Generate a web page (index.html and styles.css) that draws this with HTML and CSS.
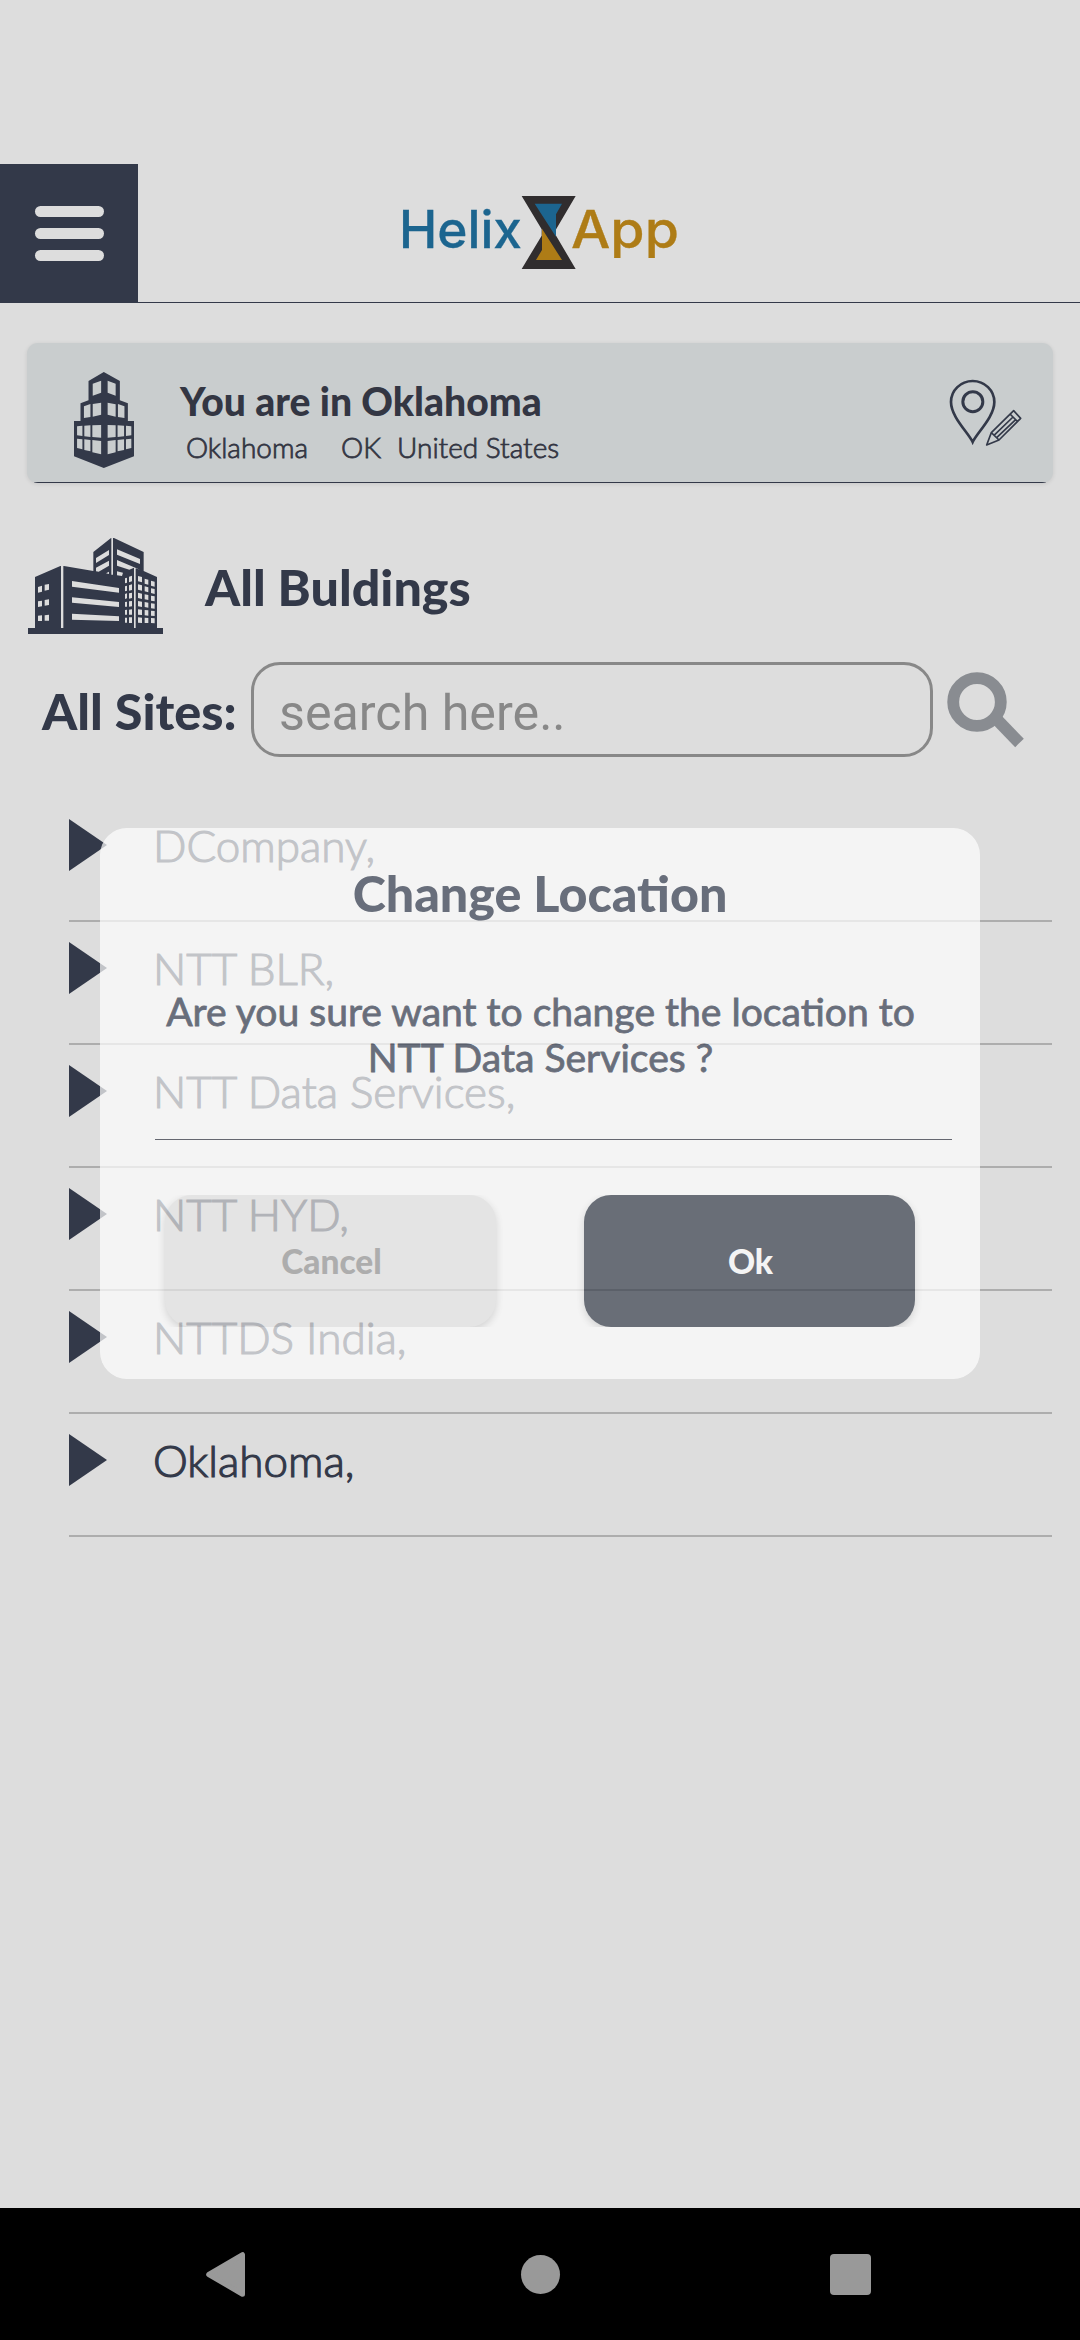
FILE: index.html
```html
<!DOCTYPE html>
<html lang="en">
<head>
<meta charset="utf-8">
<title>Helix App</title>
<link rel="stylesheet" href="styles.css">
</head>
<body>
<div class="screen">
  <header class="header">
    <button class="menu" aria-label="Menu"><span class="bar"></span><span class="bar"></span><span class="bar"></span></button>
    <svg class="logo" viewBox="0 0 300 100">
      <text class="logo-text helix" x="15" y="68.300" textLength="123" lengthAdjust="spacingAndGlyphs">Helix</text>
      <g transform="translate(-4 -10) scale(.33333)">
        <path fill="#302d2e" d="M425 78H587L527 180V195L587 297H425L485 197V178Z"/>
        <path fill="#1c658f" d="M464 101H546L528 133V200Z"/>
        <path fill="#ae7c16" d="M486 176L546 270H468L486 240Z"/>
      </g>
      <text class="logo-text app" x="187" y="68.300" textLength="108" lengthAdjust="spacingAndGlyphs">App</text>
    </svg>
  </header>

  <section class="place">
    <svg class="tower" viewBox="193 126 157 288" preserveAspectRatio="none">
      <path fill="#333949" d="M271 126L313 153V211L334 220V273H350V379L271 414L193 379V273H210V220L231 211V153Z"/>
      <path fill="#c9cdce" d="M242 161L264 152V188L242 197ZM281 152L302 161V197L281 188ZM219 229L236 222V261L219 264ZM242 222L264 218V254L242 260ZM281 218L302 223V260L281 254ZM308 222L325 229V264L308 261ZM201 289L215 287V318L201 316ZM220 287L236 286V321L220 319ZM241 286L264 285V323L241 321ZM281 285L302 286V321L281 323ZM307 286L324 287V319L307 321ZM329 287L343 289V316L329 318ZM201 326L215 328V358L201 354ZM220 328L236 330V364L220 360ZM241 330L264 333V373L241 367ZM281 333L302 330V367L281 373ZM307 330L324 328V360L307 364ZM329 328L343 326V354L329 358Z"/>
    </svg>
    <div class="place-text">
      <h2 class="place-title">You are in Oklahoma</h2>
      <p class="place-sub"><span class="city">Oklahoma</span><span class="state">OK</span><span class="country">United States</span></p>
    </div>
    <svg class="pin" viewBox="148 148 222 204" fill="none" stroke="#333949">
      <path stroke-width="8" d="M219 337C206 309 154 262 154 217A65 63 0 0 1 284 217C284 262 232 309 219 337Z"/>
      <circle stroke-width="9" cx="219.500" cy="216" r="30"/>
      <path stroke-width="5" stroke-linejoin="round" d="M342 243L363 266L298 331L261 346L275 309ZM275 309L298 331M331 253L353 275M283 317L340 262M291 324L348 270"/>
    </svg>
  </section>

  <div class="heading">
    <svg class="city-icon" viewBox="84 54 405 288">
      <path fill="#333949" d="M84 324H105V171L181 138H192L280 153V96L333 54H342L431 96V153L471 171V324H489V342H84Z"/>
      <path fill="#ddd" d="M183 138H190V324H183ZM334 54H339V164H334ZM402 143H407V324H402ZM288 114L327 90V105L288 129ZM288 143L327 122V137L296 155L288 154ZM318 160L327 155V162ZM351 88L420 117V132L351 104ZM351 120L420 149L402 143L388 149L351 137ZM351 154L369 158L366 168L351 166Z"/>
      <path fill="#ddd" d="M216 183L357 204V218L216 200ZM216 232L357 246V261L216 248ZM216 281L357 289V303L216 299ZM114 201L126 197V215L114 218ZM134 194L147 192V209L134 212ZM114 244L126 242V259L114 261ZM134 240L147 238V255L134 257ZM114 287L126 286V303H114ZM134 286L147 284V302H134Z"/>
      <path fill="#ddd" d="M375 175L381 173V188L375 190ZM387 170L396 167V184L387 187ZM375 199L381 197V212L375 214ZM387 196L396 193V210L387 212ZM375 222L381 220V235L375 237ZM387 220L396 218V234L387 236ZM375 246L381 245V260H375ZM387 244L396 243V259L387 260ZM375 270L381 269V284H375ZM387 269L396 268V284H387ZM375 293H381V308H375ZM387 292H396V309H387ZM414 168L426 171V187L414 184ZM434 176L445 179V194L434 191ZM453 182L464 185V200L453 197ZM414 193L426 196V212L414 209ZM434 199L445 202V217L434 214ZM453 205L464 207V222L453 219ZM414 218L426 221V237L414 234ZM434 223L445 225V240L434 238ZM453 227L464 229V244L453 242ZM414 243L426 245V261L414 259ZM434 246L445 248V263L434 261ZM453 250L464 251V266L453 265ZM414 268L426 269V285L414 284ZM434 270L445 271V287L434 286ZM453 272L464 273V288L453 287ZM414 292L426 293V309L414 308ZM434 293L445 294V309H434ZM453 294L464 295V310L453 309Z"/>
    </svg>
    <h1 class="heading-text">All Buldings</h1>
  </div>

  <div class="search">
    <label class="search-label">All Sites:</label>
    <div class="field">search here..</div>
    <svg class="glass" viewBox="0 0 77 76">
      <path fill="none" stroke="#898c91" stroke-width="12" d="M46 43.500L72.500 71"/>
      <circle cx="30" cy="30" r="23.800" fill="none" stroke="#898c91" stroke-width="11.800"/>
    </svg>
  </div>

  <ul class="sites">
    <li class="site"><i class="arrow"></i>DCompany,</li>
    <li class="site"><i class="arrow"></i>NTT BLR,</li>
    <li class="site"><i class="arrow"></i>NTT Data Services,</li>
    <li class="site"><i class="arrow"></i>NTT HYD,</li>
    <li class="site"><i class="arrow"></i>NTTDS India,</li>
    <li class="site"><i class="arrow"></i>Oklahoma,</li>
  </ul>

  <nav class="navbar">
    <svg class="nav-back" viewBox="0 0 39 45"><path fill="#999" stroke="#999" stroke-width="5" stroke-linejoin="round" d="M2.700 22.500L36.500 2.700V42.300Z"/></svg>
    <span class="nav-home"></span>
    <span class="nav-recent"></span>
  </nav>

  <div class="modal">
    <h2 class="modal-title">Change Location</h2>
    <p class="modal-message">Are you sure want to change the location to<br>NTT Data Services ?</p>
    <hr class="rule">
    <div class="actions">
      <div class="slot"><button class="btn cancel">Cancel</button></div>
      <div class="slot"><button class="btn ok">Ok</button></div>
    </div>
  </div>
</div>
</body>
</html>
```
FILE: styles.css
```css
* { box-sizing: border-box; }
body { margin: 0; }
h1, h2, p, ul, hr { margin: 0; padding: 0; border: 0; }
button { border: 0; padding: 0; font: inherit; }

.screen {
  position: relative;
  display: flex;
  flex-direction: column;
  width: 1080px;
  height: 2340px;
  padding-top: 164px;
  overflow: hidden;
  background: #ddd;
  color: #333949;
  font-family: Lato, "Liberation Sans", sans-serif;
}

.header { display: flex; height: 139px; border-bottom: 1px solid #333949; flex: none; }
.menu {
  display: flex;
  flex-direction: column;
  align-items: center;
  justify-content: center;
  gap: 11px;
  width: 138px;
  height: 138px;
  background: #333949;
}
.bar { width: 69px; height: 11px; border-radius: 6px; background: #ddd; }
.logo { width: 300px; height: 100px; margin: 16px 0 0 246px; overflow: visible; }
.logo-text { font: 500 51.500px Inter, sans-serif; stroke-width: .3px; }
.helix { fill: #1c658f; stroke: #1c658f; }
.app { fill: #ae7c16; stroke: #ae7c16; }

.place {
  display: flex;
  flex: none;
  width: 1026px;
  height: 140px;
  margin: 40px 0 0 27px;
  padding: 29px 29px 0 47px;
  border-radius: 11px;
  background: #c9cdce linear-gradient(#333949, #333949) 50% 139px / 1012px 1px no-repeat;
  box-shadow: 0 1px 4px rgba(0, 0, 0, .1);
}
.tower { width: 60px; height: 96px; }
.place-text { width: 815px; padding: 5px 0 0 46px; color: #333643; }
.place-title { font-size: 39.100px; line-height: 48px; font-weight: 900; }
.place-sub { display: flex; margin-top: 5px; font-size: 28px; line-height: 34px; font-weight: 300; -webkit-text-stroke: .8px; }
.city { width: 155px; margin-left: 6px; }
.state { width: 56px; }
.pin { width: 74px; height: 68px; margin-top: 7px; }

.heading { display: flex; flex: none; height: 96px; margin: 55px 0 0 28px; }
.city-icon { width: 135px; height: 96px; }
.heading-text { margin: 19px 0 0 42px; font-size: 50.200px; line-height: 60px; font-weight: 900; }

.search { display: flex; flex: none; height: 95px; margin: 28px 0 0 42px; }
.search-label { width: 209px; font-size: 50.300px; line-height: 98px; font-weight: 900; }
.field {
  width: 682px;
  height: 95px;
  padding-left: 25px;
  border: 3px solid #888;
  border-radius: 29px;
  color: #888;
  font: 50.200px/95px Roboto, sans-serif;
}
.glass { width: 77px; height: 76px; margin: 10px 0 0 14px; }

.sites { flex: 1; margin: 42px 28px 0 69px; list-style: none; }
.site {
  display: flex;
  height: 123px;
  padding-top: 20px;
  border-bottom: 2px solid #adadad;
  font-size: 44px;
  line-height: 53px;
  font-weight: 300;
  -webkit-text-stroke: 1.200px;
}
.arrow { width: 38px; height: 52px; margin-right: 46px; background: #333949; clip-path: polygon(0 0, 100% 50%, 0 100%); }

.navbar { display: flex; align-items: center; flex: none; height: 132px; padding-left: 206px; background: #000; }
.nav-back { width: 39px; height: 45px; }
.nav-home { width: 39px; height: 39px; margin-left: 276px; border-radius: 50%; background: #999; }
.nav-recent { width: 41px; height: 41px; margin-left: 270px; border-radius: 4px; background: #999; }

.modal {
  position: absolute;
  left: 100px;
  top: 828px;
  width: 880px;
  height: 551px;
  padding: 35px 28px 0 55px;
  border-radius: 27px;
  background: #fff;
  color: #384052;
  opacity: .7;
}
.modal-title { margin-right: 27px; font-size: 50.200px; line-height: 60px; font-weight: 900; text-align: center; }
.modal-message { margin-top: 65px; margin-right: 26px; font-size: 39.100px; line-height: 46px; font-weight: 400; -webkit-text-stroke: .8px; text-align: center; white-space: nowrap; }
.rule { height: 1px; margin-top: 59px; background: #333643; }
.actions { display: flex; gap: 68px; margin-top: 55px; }
.slot { height: 132px; padding: 0 10px; overflow: hidden; }
.btn { display: block; width: 331px; height: 132px; padding: 0 0 0 2px; border-radius: 27px; box-shadow: 0 3px 8px rgba(0, 0, 0, .2); font-size: 33.500px; font-weight: 900; }
.cancel { background: #e7e7e7; color: #999; }
.ok { background: #39404d; color: #fff; }
```
